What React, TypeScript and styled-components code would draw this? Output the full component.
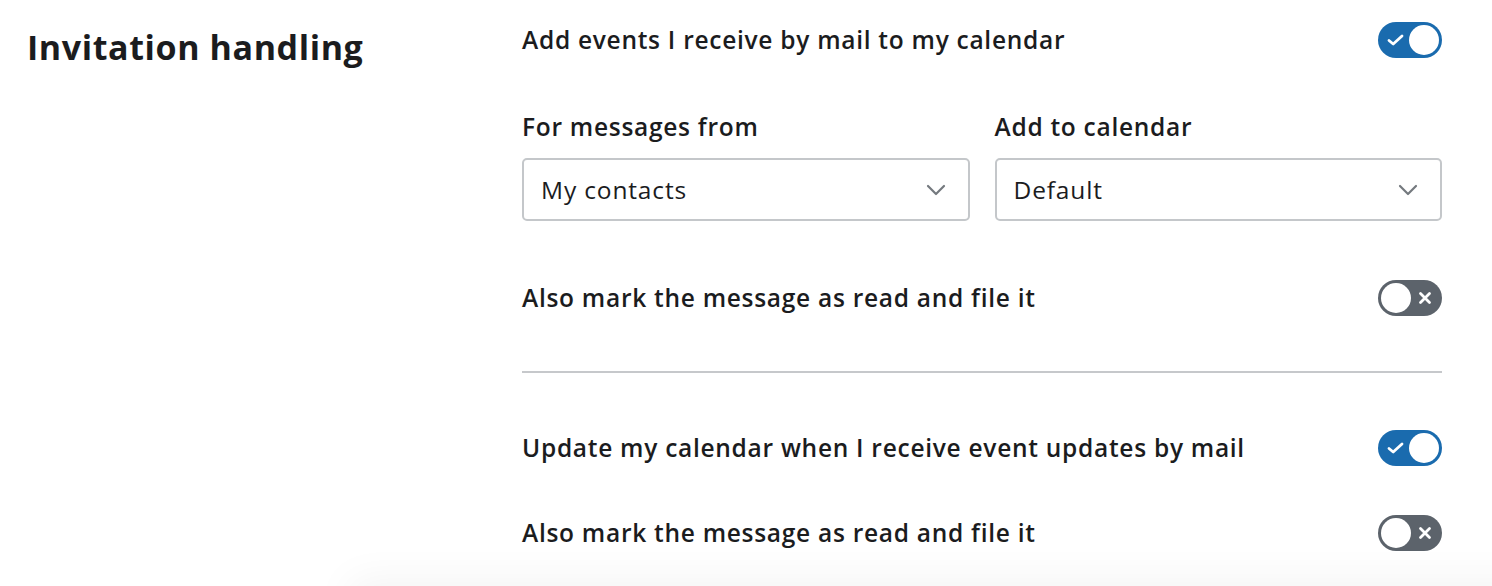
import React, { useState } from "react";
import styled, { createGlobalStyle } from "styled-components";

const Global = createGlobalStyle`
  html, body { margin: 0; padding: 0; background: #ffffff; }
  body { font-family: "Open Sans", "Noto Sans", sans-serif; color: #1b1c1e; }
  * { box-sizing: border-box; }
`;

const Page = styled.div`
  display: grid;
  grid-template-columns: 495px 920px;
  padding: 22px 0 0 27px;
  height: 586px;
  overflow: hidden;
  position: relative;
`;

const Heading = styled.h2`
  margin: 3px 0 0 0;
  font-size: 34px;
  font-weight: 700;
  line-height: 44px;
  letter-spacing: 0.6px;
  color: #1b1c1e;
`;

const Column = styled.div`
  display: flex;
  flex-direction: column;
`;

const Row = styled.div<{ $mt?: number }>`
  display: flex;
  align-items: center;
  justify-content: space-between;
  height: 36px;
  margin-top: ${(p) => p.$mt ?? 0}px;
`;

const RowText = styled.span`
  font-size: 24.5px;
  font-weight: 600;
  line-height: 30px;
  letter-spacing: 0.72px;
  color: #1b1c1e;
`;

const Fields = styled.div`
  display: grid;
  grid-template-columns: 1fr 1fr;
  column-gap: 25px;
  margin-top: 54px;
`;

const Field = styled.div`
  display: flex;
  flex-direction: column;
  gap: 16px;
`;

const FieldLabel = styled.label`
  font-size: 24.5px;
  font-weight: 600;
  line-height: 30px;
  letter-spacing: 0.72px;
  color: #1b1c1e;
`;

const SelectBox = styled.button`
  display: flex;
  align-items: center;
  justify-content: space-between;
  height: 63px;
  width: 100%;
  padding: 0 22px 0 17px;
  border: 2px solid #c4c7ca;
  border-radius: 5px;
  background: #fff;
  font-family: inherit;
  font-size: 24.5px;
  font-weight: 400;
  letter-spacing: 0.85px;
  color: #1b1c1e;
  cursor: pointer;
  text-align: left;
`;

const Divider = styled.hr`
  border: none;
  height: 2px;
  background: #c6c8cb;
  margin: 55px 0 0 0;
  width: 100%;
`;

const Track = styled.button<{ $on: boolean }>`
  position: relative;
  width: 64px;
  height: 36px;
  border-radius: 18px;
  border: none;
  padding: 0;
  background: ${(p) => (p.$on ? "#1a6bae" : "#5c636b")};
  cursor: pointer;
  flex-shrink: 0;
`;

const Knob = styled.span<{ $on: boolean }>`
  position: absolute;
  top: 3px;
  left: ${(p) => (p.$on ? "31px" : "3px")};
  width: 30px;
  height: 30px;
  border-radius: 50%;
  background: #ffffff;
`;

const TrackIcon = styled.svg<{ $on: boolean }>`
  position: absolute;
  top: 10px;
  left: ${(p) => (p.$on ? "9px" : "39px")};
  width: 17px;
  height: 16px;
`;

const Footer = styled.div`
  position: absolute;
  left: 350px;
  right: -40px;
  bottom: -60px;
  height: 60px;
  box-shadow: 0 -6px 40px rgba(0, 0, 0, 0.05);
  background: #fff;
`;

function Toggle({ initial }: { initial: boolean }) {
  const [on, setOn] = useState(initial);
  return (
    <Track $on={on} onClick={() => setOn(!on)} aria-pressed={on}>
      <TrackIcon $on={on} viewBox="0 0 17 16" fill="none" stroke="#fff" strokeWidth={2.8} strokeLinecap="round" strokeLinejoin="round">
        {on ? <path d="M2 8.5 L6.2 12 L15 4" /> : <path d="M3.5 3.5 L12.5 12.5 M12.5 3.5 L3.5 12.5" />}
      </TrackIcon>
      <Knob $on={on} />
    </Track>
  );
}

function Chevron() {
  return (
    <svg width="20" height="12" viewBox="0 0 20 12" fill="none" stroke="#74797e" strokeWidth={2.2} strokeLinecap="round" strokeLinejoin="round">
      <path d="M2 2 L10 10 L18 2" />
    </svg>
  );
}

function Select({ value }: { value: string }) {
  return (
    <SelectBox type="button">
      <span>{value}</span>
      <Chevron />
    </SelectBox>
  );
}

export default function App() {
  return (
    <>
      <Global />
      <Page>
        <Heading>Invitation handling</Heading>
        <Column>
          <Row>
            <RowText>Add events I receive by mail to my calendar</RowText>
            <Toggle initial={true} />
          </Row>
          <Fields>
            <Field>
              <FieldLabel>For messages from</FieldLabel>
              <Select value="My contacts" />
            </Field>
            <Field>
              <FieldLabel>Add to calendar</FieldLabel>
              <Select value="Default" />
            </Field>
          </Fields>
          <Row $mt={59}>
            <RowText>Also mark the message as read and file it</RowText>
            <Toggle initial={false} />
          </Row>
          <Divider />
          <Row $mt={57}>
            <RowText>Update my calendar when I receive event updates by mail</RowText>
            <Toggle initial={true} />
          </Row>
          <Row $mt={49}>
            <RowText>Also mark the message as read and file it</RowText>
            <Toggle initial={false} />
          </Row>
        </Column>
        <Footer />
      </Page>
    </>
  );
}
